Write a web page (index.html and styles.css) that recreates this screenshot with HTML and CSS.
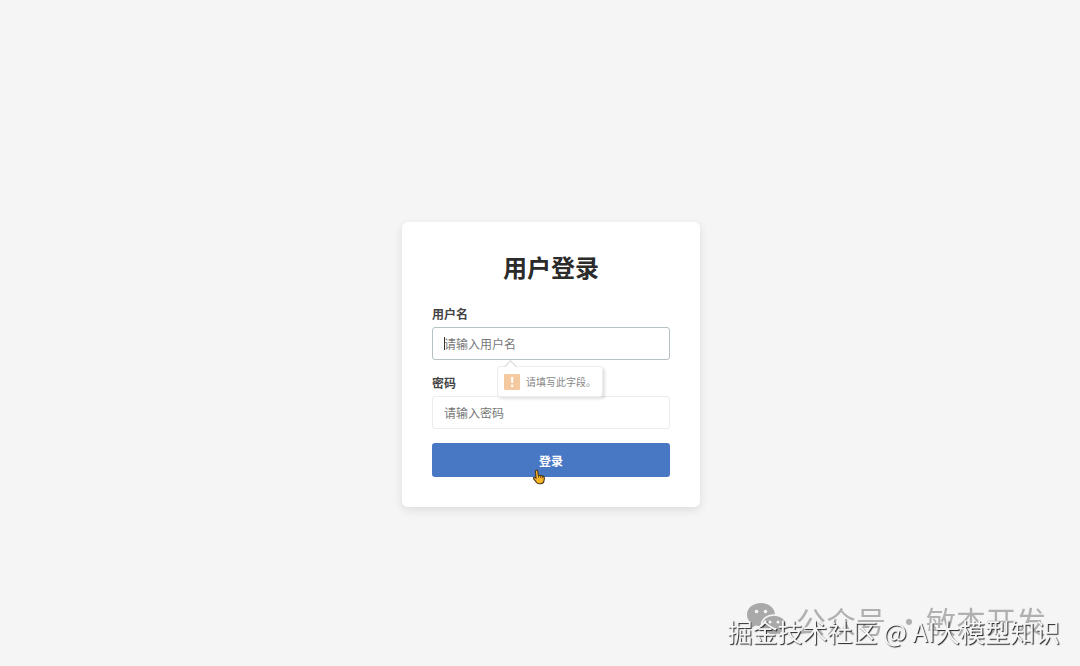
FILE: index.html
```html
<!DOCTYPE html>
<html lang="zh-CN">
  <head>
    <meta charset="UTF-8" />
    <meta name="viewport" content="width=device-width, initial-scale=1.0" />
    <title>用户登录</title>
    <link rel="stylesheet" href="styles.css">
  </head>
  <body>
    <main class="login-container">
      <h1>用户登录</h1>
      <form id="login-form">
        <div class="form-group">
          <label for="username">用户名</label>
          <div class="field">
            <input type="text" id="username" class="active" name="username" placeholder="请输入用户名" required />
            <span class="caret"></span>
            <div class="tooltip" role="alert">
              <span class="tooltip-icon">
                <svg width="16" height="16" viewBox="0 0 16 16">
                  <path d="M7 3h2.4l-.5 6H7.4z" fill="#fff" />
                  <circle cx="8.1" cy="11.8" r="1.2" fill="#fff" />
                </svg>
              </span>
              <span>请填写此字段。</span>
            </div>
          </div>
        </div>

        <div class="form-group">
          <label for="password">密码</label>
          <div class="field">
            <input type="password" id="password" name="password" placeholder="请输入密码" required />
          </div>
        </div>

        <button type="submit">
          登录
          <svg class="pointer" width="14" height="16" viewBox="0 0 14 16">
            <path d="M4.2 1.2c.9-.3 1.5.2 1.6 1l.5 4 4.3.7c1.3.3 1.9 1.1 1.8 2.4l-.4 2.6c-.3 1.8-1.5 2.8-3.4 2.8H7.2c-1.3 0-2.2-.5-2.9-1.5L1.5 9.6c-.5-.8.3-1.7 1.2-1.2l1.3.8-.6-6.7c0-.7.2-1.1.8-1.3z" fill="#f6b426" stroke="#4a3a1c" stroke-width="1.1" />
            <path d="M6.5 6.5v2.3M8.6 7v2M10.5 7.3v1.9" stroke="#4a3a1c" stroke-width=".8" />
          </svg>
        </button>
      </form>
    </main>

    <div class="watermark">
      <div class="account">
        <svg width="42" height="36" viewBox="0 0 42 36">
          <path d="M15 1C7 1 1 6 1 12.8c0 3.8 2 7 5.2 9.2L5 26l4.8-2.4c1.7.5 3.4.7 5.2.7C23 24.3 29 19.3 29 12.8S23 1 15 1z" fill="#a9a9a9" />
          <path d="M28 13c-7 0-12.5 4.3-12.5 10S21 33 28 33c1.4 0 2.8-.2 4.1-.6L36 34.5l-1-3.5c3.3-1.8 5.5-4.6 5.5-8 0-5.7-5.5-10-12.5-10z" fill="#a9a9a9" stroke="#f5f5f5" stroke-width="1.5" />
          <g fill="#f5f5f5">
            <circle cx="10.5" cy="9.5" r="1.8" />
            <circle cx="19.5" cy="9.5" r="1.8" />
            <circle cx="24" cy="20" r="1.5" />
            <circle cx="32" cy="20" r="1.5" />
          </g>
        </svg>
        <span>公众号</span>
        <span class="dot">·</span>
        <span>敏杰开发</span>
      </div>
      <div class="community">掘金技术社区 @ AI大模型知识</div>
    </div>
  </body>
</html>
```
FILE: styles.css
```css
/* 全局样式 */
* {
  box-sizing: border-box;
}

body {
  font-family: "Noto Sans CJK SC", sans-serif;
  background-color: #f5f5f5;
  margin: 0;
  padding: 63px 0 0 22px;
  display: flex;
  justify-content: center;
  align-items: center;
  min-height: 100vh;
}

/* 登录卡片 */
.login-container {
  width: 100%;
  max-width: 298px;
  padding: 30px;
  background: #fff;
  border-radius: 6px;
  box-shadow: 0 3px 10px rgba(0, 0, 0, 0.1);
}

h1 {
  margin: 0 0 23px;
  font-size: 24px;
  line-height: 30px;
  text-align: center;
  color: #2b2b2b;
}

/* 表单 */
.form-group {
  margin-bottom: 14px;
}

label {
  display: block;
  margin-bottom: 4px;
  font-size: 12px;
  line-height: 18px;
  font-weight: bold;
  color: #444;
}

.field {
  position: relative;
}

input {
  display: block;
  width: 100%;
  height: 33px;
  padding: 0 11px;
  border: 1px solid #ececec;
  border-radius: 3px;
  background: #fff;
  font-family: inherit;
  font-size: 12px;
  color: #333;
  outline: none;
}

input::placeholder {
  color: #777;
}

input.active,
input:focus {
  border-color: #b5c1c5;
}

.caret {
  position: absolute;
  top: 10px;
  left: 12px;
  width: 1px;
  height: 13px;
  background: #333;
}

/* 校验提示 */
.tooltip {
  position: absolute;
  z-index: 1;
  top: 39px;
  left: 65px;
  display: flex;
  align-items: center;
  gap: 6px;
  height: 31px;
  padding: 0 6px;
  border: 1px solid #ececec;
  border-radius: 3px;
  background: #fff;
  box-shadow: 2px 2px 3px rgba(0, 0, 0, 0.12);
  font-size: 10px;
  color: #888;
  white-space: nowrap;
}

.tooltip::before {
  content: "";
  position: absolute;
  top: -5px;
  left: 8px;
  width: 8px;
  height: 8px;
  border: 1px solid #d5d5d5;
  border-width: 1px 0 0 1px;
  background: #fff;
  transform: rotate(45deg);
}

.tooltip-icon {
  display: flex;
  border-radius: 1px;
  background: #f5c9a0;
}

/* 按钮 */
button {
  position: relative;
  display: block;
  width: 100%;
  height: 34px;
  padding: 0;
  border: none;
  border-radius: 3px;
  background-color: #4878c4;
  font-family: inherit;
  font-size: 12px;
  font-weight: bold;
  color: #fff;
  cursor: pointer;
}

.pointer {
  position: absolute;
  top: 26px;
  left: 100px;
}

/* 水印 */
.watermark {
  position: fixed;
  right: 20px;
  bottom: 17px;
  white-space: nowrap;
}

.account {
  position: absolute;
  right: 14px;
  bottom: 0;
  display: flex;
  align-items: center;
  gap: 8px;
  font-size: 30px;
  line-height: 58px;
  color: #b0b0b0;
}

.dot {
  width: 24px;
}

.community {
  position: relative;
  font-size: 25px;
  line-height: 36px;
  color: #f5f5f5;
  text-shadow: 1px 1px 1px #222;
}
```
